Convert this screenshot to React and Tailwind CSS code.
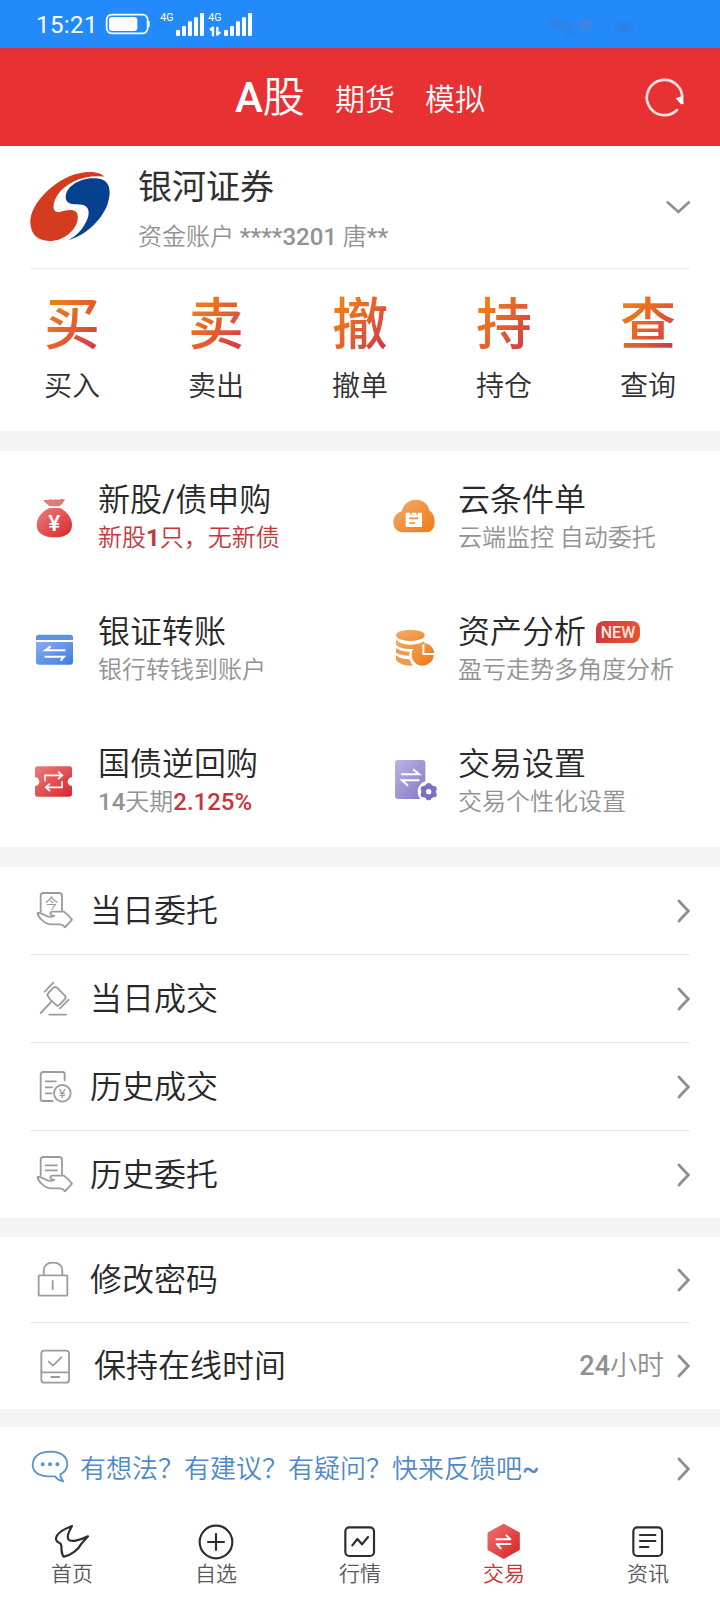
const FONT = "font-['Roboto','Noto_Sans_CJK_SC',sans-serif]";

function Grad({ id, from, to }) {
  return (
    <defs>
      <linearGradient id={id} x1="0" y1="0" x2="1" y2="1">
        <stop offset="0" stopColor={from} />
        <stop offset="1" stopColor={to} />
      </linearGradient>
    </defs>
  );
}

function StatusBar() {
  return (
    <div className="flex h-12 items-center bg-[#238afb] pl-[36px] text-white">
      <span className="w-[68px] pt-px text-[24px] leading-[48px] font-normal tracking-[0.4px]">15:21</span>
      <svg className="h-12 w-[160px] shrink-0" viewBox="312 0 480 144" fill="none">
        <rect x="320" y="44" width="123" height="56" rx="15" stroke="#fff" strokeWidth="5" />
        <rect x="327" y="51" width="85" height="42" rx="9" fill="#fff" />
        <path d="M446 66v12" stroke="#fff" strokeWidth="6" strokeLinecap="round" />
        <g fill="#fff">
          <rect x="528" y="90" width="12" height="18" rx="3" />
          <rect x="546" y="78" width="12" height="30" rx="3" />
          <rect x="564" y="64" width="12" height="44" rx="3" />
          <rect x="582" y="52" width="12" height="56" rx="3" />
          <rect x="600" y="39" width="12" height="69" rx="3" />
          <rect x="672" y="90" width="12" height="18" rx="3" />
          <rect x="690" y="78" width="12" height="30" rx="3" />
          <rect x="708" y="64" width="12" height="44" rx="3" />
          <rect x="726" y="52" width="12" height="56" rx="3" />
          <rect x="744" y="39" width="12" height="69" rx="3" />
        </g>
        <path d="M630 90l9-7v26M652 80v24l9-8" stroke="#fff" strokeWidth="7" strokeLinejoin="round" />
        <text x="481" y="63" fill="#fff" fontSize="32" fontWeight="400">4G</text>
        <text x="625" y="63" fill="#fff" fontSize="32" fontWeight="400">4G</text>
      </svg>
      <svg className="ml-[276px] h-12 w-[100px] shrink-0 opacity-40 blur-[2px]" viewBox="0 0 100 48">
        <ellipse cx="20" cy="24" rx="14" ry="5" fill="#3a78c8" />
        <ellipse cx="45" cy="25" rx="7" ry="5" fill="#7a78b8" />
        <ellipse cx="30" cy="33" rx="6" ry="3" fill="#3a70c0" />
        <ellipse cx="84" cy="27" rx="8" ry="5" fill="#4070b8" />
      </svg>
    </div>
  );
}

function Header() {
  return (
    <header className="flex h-[98px] items-center border-t-2 border-[#d8323c] bg-[#e73132] pl-[235px] text-white">
      <span className="w-[100px] text-[42px] leading-[94px]">
        <span className="font-medium">A</span>股
      </span>
      <span className="w-[90px] pt-[4px] text-[30px] leading-[90px]">期货</span>
      <span className="w-[215px] pt-[4px] text-[30px] leading-[90px]">模拟</span>
      <svg className="h-12 w-12" viewBox="840 218 144 144" fill="none">
        <path d="M951 326A53 53 0 1 1 966 296" stroke="#fbe3e3" strokeWidth="8" strokeLinecap="round" />
        <path d="M947 291l21-7 3 24-8 1z" fill="#fff" />
      </svg>
    </header>
  );
}

function Account() {
  return (
    <div className="mx-[30px] flex h-[123px] border-b border-[#e8e8e8]">
      <svg className="h-[122px] w-[108px] shrink-0" viewBox="90 -12 324 366">
        <path d="M312 80C298 62 250 61 205 80C140 110 88 172 91 220C94 262 122 276 160 272C205 266 238 226 233 196C229 172 196 181 176 187C153 187 159 156 172 136C198 97 255 72 312 80Z" fill="#d33c1e" />
        <path d="M296 86C250 80 200 104 197 140C197 170 232 160 249 165C275 172 268 205 250 230C236 250 222 262 204 270C255 258 305 210 322 164C336 124 330 90 296 86Z" fill="#06418f" />
      </svg>
      <div className="flex-1 pt-[19px]">
        <div className="text-[34px] leading-[44px] font-normal text-[#303030]">银河证券</div>
        <div className="mt-[10px] text-[24px] leading-[36px] text-[#929292]">
          资金账户 <span className="font-medium">****3201</span> 唐<span className="font-medium">**</span>
        </div>
      </div>
      <svg className="mt-[49px] h-6 w-6" viewBox="917 585 72 72" fill="none">
        <path d="M922 607l32 29 32-29" stroke="#8f8f8f" strokeWidth="8" strokeLinecap="round" />
      </svg>
    </div>
  );
}

const ACTIONS = [
  ["买", "买入"],
  ["卖", "卖出"],
  ["撤", "撤单"],
  ["持", "持仓"],
  ["查", "查询"],
];

function Actions() {
  return (
    <div className="grid h-[162px] grid-cols-5 pt-[22px]">
      {ACTIONS.map(([big, label]) => (
        <div key={label} className="flex flex-col items-center">
          <span className="bg-linear-to-br from-[#f08010] from-15% via-[#e4602a] to-[#d23a48] to-85% bg-clip-text text-[56px] leading-[68px] font-medium text-transparent">
            {big}
          </span>
          <span className="pt-[3px] text-[28px] leading-[50px] text-[#303030]">{label}</span>
        </div>
      ))}
    </div>
  );
}

function TileIcon({ row, children }) {
  const boxes = ["0 -27 294 396", "0 369 294 396", "0 765 294 396"];
  return (
    <svg className="h-[132px] w-[98px] shrink-0" viewBox={boxes[row]} fill="none">
      {children}
    </svg>
  );
}

const BagIcon = (
  <TileIcon row={0}>
    <Grad id="bag" from="#e88080" to="#dc2428" />
    <path d="M130 121q8-4 14 0q8-6 16-1q8-5 15 0q10-6 20-1q-8 14-17 20h-29q-12-8-19-18z" fill="#de7a78" />
    <path d="M148 144h32c22 10 36 32 36 50c0 28-22 38-52 38s-54-10-54-38c0-20 16-40 38-50z" fill="url(#bag)" />
    <text x="163" y="212" textAnchor="middle" fontSize="68" fontWeight="500" fill="#fff">¥</text>
  </TileIcon>
);

const CloudIcon = (
  <TileIcon row={0}>
    <Grad id="cloud" from="#f0ad70" to="#f07a10" />
    <path d="M128 217c-16 0-28-14-28-31c0-16 11-28 26-32c2-20 20-35 42-35s38 15 40 33c10 4 16 18 16 32c0 20-8 33-26 33z" fill="url(#cloud)" />
    <rect x="137" y="158" width="49" height="43" rx="3" fill="#fff" />
    <path d="M150 161h5M169 161h5M148 175h27M148 189h18" stroke="#e89038" strokeWidth="5" />
  </TileIcon>
);

const CardIcon = (
  <TileIcon row={1}>
    <Grad id="card" from="#86aef0" to="#3f7ce0" />
    <path d="M116 524h95q8 0 8 8v8H108v-8q0-8 8-8z" fill="#5f92e0" />
    <path d="M108 546h111v59q0 9-9 9h-93q-9 0-9-9z" fill="url(#card)" />
    <path d="M196 571h-60l16-12M134 590h58l-10 12" stroke="#fff" strokeWidth="6" />
  </TileIcon>
);

const CoinsIcon = (
  <TileIcon row={1}>
    <Grad id="coin" from="#f0b070" to="#ef8a30" />
    <Grad id="pie" from="#f0a050" to="#ee7812" />
    <ellipse cx="151" cy="526" rx="43" ry="17" fill="url(#coin)" />
    <path d="M108 538q12 16 44 16q26 0 40-10l2 8q-18 4-26 14q-46 4-60-12z" fill="url(#coin)" />
    <path d="M108 564q12 10 42 12q-3 6-3 11q-26-1-39-9zM108 586q12 12 40 12l10 19q-40 0-50-18z" fill="#ee9c4c" />
    <path d="M187 551a33 33 0 1 0 34 34h-34z" fill="url(#pie)" />
    <path d="M193 549q26 4 30 30h-30z" fill="url(#pie)" />
  </TileIcon>
);

const TicketIcon = (
  <TileIcon row={2}>
    <Grad id="ticket" from="#ec7c7c" to="#d9262c" />
    <path d="M113 919h96q7 0 7 7v26a13 13 0 0 0 0 26v24q0 8-8 8h-95q-8 0-8-8v-24a13 13 0 0 0 0-26v-25q0-8 8-8z" fill="url(#ticket)" />
    <path d="M135 964v-18h50M174 935l13 11-13 11M186 964v18h-48M150 971l-13 11 13 11" stroke="#fff" strokeWidth="5" />
  </TileIcon>
);

const SettingsIcon = (
  <TileIcon row={2}>
    <Grad id="doc" from="#bdb3e0" to="#8478c8" />
    <rect x="105" y="900" width="91" height="117" rx="9" fill="url(#doc)" />
    <path d="M124 943h54l-19-15M178 961h-52l18 16" stroke="#fff" strokeWidth="6" />
    <circle cx="206" cy="995" r="33" fill="#fff" />
    <g fill="#7c70c0">
      <circle cx="206" cy="995" r="22" />
      <circle cx="206" cy="977" r="8" />
      <circle cx="222" cy="986" r="8" />
      <circle cx="222" cy="1004" r="8" />
      <circle cx="206" cy="1013" r="8" />
      <circle cx="190" cy="1004" r="8" />
      <circle cx="190" cy="986" r="8" />
    </g>
    <circle cx="206" cy="995" r="8" fill="#fff" />
  </TileIcon>
);

function Tile({ icon, title, badge, children }) {
  return (
    <div className="flex h-[132px]">
      {icon}
      <div className="pt-[30px]">
        <div className="flex items-center text-[32px] leading-[38px] text-[#282828]">
          {title}
          {badge && (
            <span className="ml-[10px] h-[22px] w-[44px] rounded-[8px] rounded-bl-none bg-linear-to-r from-[#d2383c] to-[#e8542c] text-center text-[16px] leading-[23px] font-medium text-[#fce8e0]">
              {badge}
            </span>
          )}
        </div>
        <div className="text-[24px] leading-[38px] text-[#929292]">{children}</div>
      </div>
    </div>
  );
}

function Tiles() {
  return (
    <div className="grid grid-cols-2">
      <Tile icon={BagIcon} title={<>新股<span className="font-normal">/</span>债申购</>}>
        <span className="text-[#c6373b]">新股<span className="font-bold">1</span>只，无新债</span>
      </Tile>
      <Tile icon={CloudIcon} title="云条件单">云端监控 自动委托</Tile>
      <Tile icon={CardIcon} title="银证转账">银行转钱到账户</Tile>
      <Tile icon={CoinsIcon} title="资产分析" badge="NEW">盈亏走势多角度分析</Tile>
      <Tile icon={TicketIcon} title="国债逆回购">
        <span className="font-medium">14</span>天期<span className="font-medium text-[#c6373b]">2.125%</span>
      </Tile>
      <Tile icon={SettingsIcon} title="交易设置">交易个性化设置</Tile>
    </div>
  );
}

function Chevron() {
  return (
    <svg className="h-[26px] w-[14px] shrink-0" viewBox="0 0 14 26" fill="none">
      <path d="M3 3L12.3 13L3 23" stroke="#8e8e8e" strokeWidth="2.7" strokeLinecap="round" />
    </svg>
  );
}

function RowIcon({ box, children, color = "#9c9c9c" }) {
  return (
    <svg className="h-[88px] w-[61px] shrink-0" viewBox={box} fill="none" stroke={color} strokeWidth="5.5" strokeLinecap="round" strokeLinejoin="round">
      {children}
    </svg>
  );
}

function Hand() {
  return (
    <>
      <path d="M122 154V106q0-8 8-8h48q8 0 8 8v44" />
      <path d="M192 154h-32q-9 0-9 6q0 5 12 7q-17 6-28-2q-10-8-22-7q0 10 14 22q12 12 27 12h27q8 1 14 9l21-23q-12-16-24-24z" />
    </>
  );
}

const TodayOrder = (
  <RowIcon box="90 20 183 264">
    <Hand />
    <text x="154" y="143" textAnchor="middle" fontSize="40" fontWeight="400" fill="#999" stroke="none">今</text>
  </RowIcon>
);
const TodayDeal = (
  <RowIcon box="90 284 183 264">
    <path d="M134 394l26-27M180 444l26-26M122 458l33-35M148 463h50" />
    <path d="M144 408q-4-6 2-11l12-13q7-7 14-1l22 22q6 6 0 12l-15 16q-6 6-12 0l-17-16z" />
  </RowIcon>
);
const PastDeal = (
  <RowIcon box="90 548 183 264">
    <path d="M194 660v-18q0-7-7-7h-57q-8 0-8 8v72q0 7 7 7h29M137 663h31M137 681h20M137 699h18" />
    <circle cx="187" cy="699" r="25" />
    <text x="187" y="713" textAnchor="middle" fontSize="40" fontWeight="400" fill="#999" stroke="none">¥</text>
  </RowIcon>
);
const PastOrder = (
  <RowIcon box="90 812 183 264">
    <g transform="translate(0 792)">
      <Hand />
      <path d="M137 123h34M137 138h34" />
    </g>
  </RowIcon>
);
const LockIcon = (
  <RowIcon box="90 46 183 264">
    <path d="M131 163v-11q0-26 28-26t28 26v11M158 181v24" />
    <rect x="116" y="164" width="86" height="61" rx="2" />
  </RowIcon>
);
const OnlineIcon = (
  <RowIcon box="90 307 183 264">
    <rect x="124" y="393" width="83" height="96" rx="9" />
    <path d="M124 458h83M154 472h24M146 426l13 12 25-25" />
  </RowIcon>
);
const FeedbackIcon = (
  <RowIcon box="90 615 183 264" color="#5b93cc">
    <path d="M190 784q-16-2-25-15q-66 4-67-35q3-38 53-39q50 2 51 38q-1 20-21 30q0 12 9 21z" />
    <path d="M128 733h.1M150 733h.1M172 733h.1" strokeWidth="12" />
  </RowIcon>
);

function Row({ icon, title, value, last, inset, height = "h-[88px]" }) {
  return (
    <div className={`mx-[30px] flex items-center overflow-hidden ${height} ${last ? "" : "border-b border-[#e6e6e6]"}`}>
      {icon}
      <span className={`-ml-px flex-1 text-[32px] leading-[44px] text-[#282828] ${inset ? "pl-[4px]" : ""}`}>{title}</span>
      {value && (
        <span className="pr-[12px] text-[27px] leading-[44px] text-[#909090]">
          <span className="font-medium">{value[0]}</span>
          {value[1]}
        </span>
      )}
      <Chevron />
    </div>
  );
}

const Gap = ({ className }) => <div className={`bg-[#f4f4f4] ${className}`} />;

function NavItem({ box, label, active, children }) {
  return (
    <div className="flex flex-col items-center">
      <svg className="h-[50px] w-[144px]" viewBox={box} fill="none" stroke="#2d2d2d" strokeWidth="6.5" strokeLinecap="round" strokeLinejoin="round">
        {children}
      </svg>
      <span className={`text-[21px] leading-[24px] ${active ? "text-[#c43434]" : "text-[#585858]"}`}>{label}</span>
    </div>
  );
}

function Nav() {
  return (
    <nav className="grid h-[88px] grid-cols-5">
      <NavItem box="0 36 432 150" label="首页">
        <path d="M216 78C190 88 167 102 168 118C169 129 184 126 184 137C184 151 187 168 192 170C212 166 236 148 244 131L264 109C240 121 210 129 204 116C200 106 208 92 216 78Z" />
      </NavItem>
      <NavItem box="432 36 432 150" label="自选">
        <circle cx="648" cy="126" r="49" />
        <path d="M624 126h48M648 102v48" />
      </NavItem>
      <NavItem box="864 36 432 150" label="行情">
        <rect x="1036" y="82" width="86" height="86" rx="12" />
        <path d="M1057 136l15-19 14 16 18-22" />
      </NavItem>
      <NavItem box="1296 36 432 150" label="交易" active>
        <Grad id="hex" from="#f07070" to="#da2228" />
        <path d="M1511 75l45 25v48l-45 25-45-25v-48z" fill="url(#hex)" stroke="url(#hex)" strokeWidth="7" />
        <path d="M1489 118h42l-12-12M1531 132h-41l12 13" stroke="#fff" strokeWidth="6" />
      </NavItem>
      <NavItem box="1728 36 432 150" label="资讯">
        <rect x="1900" y="82" width="86" height="86" rx="12" />
        <path d="M1920 105h46M1920 123h46M1920 141h25" />
      </NavItem>
    </nav>
  );
}

export default function App() {
  return (
    <div className={`${FONT} h-[1600px] w-[720px] overflow-hidden bg-white font-[350]`} lang="zh-CN">
      <StatusBar />
      <Header />
      <Account />
      <Actions />
      <Gap className="h-5" />
      <Tiles />
      <Gap className="h-5" />
      <Row icon={TodayOrder} title="当日委托" />
      <Row icon={TodayDeal} title="当日成交" />
      <Row icon={PastDeal} title="历史成交" />
      <Row icon={PastOrder} title="历史委托" last height="h-[87px]" />
      <Gap className="h-[19px]" />
      <Row icon={LockIcon} title="修改密码" height="h-[86px]" />
      <Row icon={OnlineIcon} title="保持在线时间" inset value={["24", "小时"]} last height="h-[86px]" />
      <Gap className="h-[18px]" />
      <div className="mx-[30px] flex h-[83px] items-center overflow-hidden">
        {FeedbackIcon}
        <span className="-ml-[11px] flex-1 text-[26px] leading-[44px] text-[#5089c6]">
          有想法？有建议？有疑问？快来反馈吧<span className="font-medium">~</span>
        </span>
        <Chevron />
      </div>
      <div className="h-[2px]" />
      <Nav />
    </div>
  );
}
